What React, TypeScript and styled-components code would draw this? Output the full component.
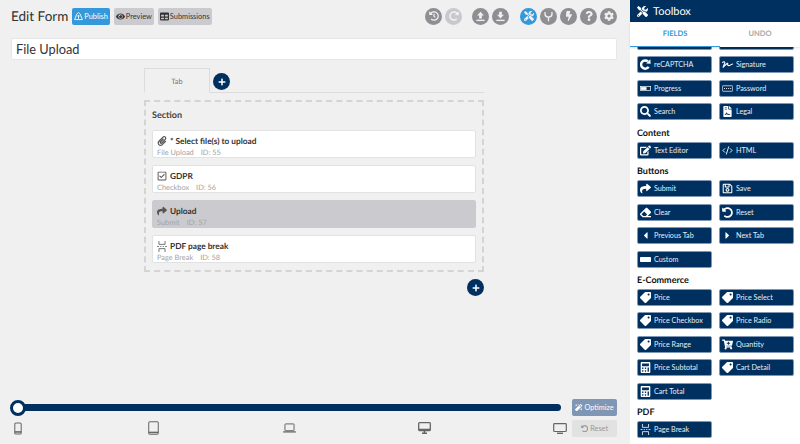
import React from 'react';
import styled, { createGlobalStyle } from 'styled-components';
import {
  FaBolt,
  FaCalculator,
  FaCaretLeft,
  FaCaretRight,
  FaCartPlus,
  FaCog,
  FaEdit,
  FaEraser,
  FaEye,
  FaFileContract,
  FaHistory,
  FaMagic,
  FaPaperclip,
  FaPlus,
  FaQuestion,
  FaRedoAlt,
  FaRegCheckSquare,
  FaRegSave,
  FaSearch,
  FaShare,
  FaSignature,
  FaTable,
  FaTag,
  FaTools,
  FaUndoAlt,
} from 'react-icons/fa';
import { LuCodeXml } from 'react-icons/lu';

const NAVY = '#00305f';

const GlobalStyle = createGlobalStyle`
  html, body, #root {
    margin: 0;
    height: 100%;
  }
  body {
    background: #f0f0f0;
    font-family: Lato, "Open Sans", "Liberation Sans", sans-serif;
    text-rendering: geometricPrecision;
    overflow: hidden;
  }
  * { box-sizing: border-box; }
`;

const UploadGlyph = () => (
  <svg viewBox="0 0 16 16" width="11" height="11" fill="currentColor">
    <path d="M8 1 13 6.5H10V11H6V6.5H3Z" />
    <rect x="2" y="12.6" width="12" height="2" />
  </svg>
);

const DownloadGlyph = () => (
  <svg viewBox="0 0 16 16" width="11" height="11" fill="currentColor">
    <path d="M8 11 13 5.5H10V1H6V5.5H3Z" />
    <rect x="2" y="12.6" width="12" height="2" />
  </svg>
);

const ForkGlyph = () => (
  <svg viewBox="0 0 16 16" width="11" height="11" fill="none" stroke="currentColor" strokeWidth="2">
    <path d="M3 1.5V5Q3 8 8 9Q13 8 13 5V1.5M8 9V15" />
  </svg>
);

const PublishGlyph = () => (
  <svg viewBox="0 0 16 16" width="9" height="9" fill="none" stroke="currentColor" strokeWidth="1.5">
    <path d="M8 12V6M5.5 8 8 5.5 10.5 8" />
    <path d="M5 3.5 8 1 11 3.5 15 13.5H1Z" />
  </svg>
);

const PageBreakGlyph = () => (
  <svg viewBox="0 0 16 18" width="100%" height="100%" fill="none" stroke="currentColor" strokeWidth="1.3">
    <path d="M3 0V5.5H13V0M3 18V12.500H13V18M0 9H3M5 9H7M9 9H11M13 9H16" />
  </svg>
);

const ProgressGlyph = () => (
  <svg viewBox="0 0 16 10" width="100%" height="100%" fill="none" stroke="currentColor" strokeWidth="1">
    <rect x="0.5" y="2" width="15" height="6" />
    <rect x="1.5" y="3" width="8" height="4" fill="currentColor" stroke="none" />
  </svg>
);

const PasswordGlyph = () => (
  <svg viewBox="0 0 16 10" width="100%" height="100%" fill="none" stroke="currentColor" strokeWidth="1">
    <rect x="0.5" y="1" width="15" height="8" rx="1" />
    <path d="M3 5H4.4M6 5H7.4M9 5H10.4M12 5H13.4" strokeWidth="1.4" />
  </svg>
);

const CustomGlyph = () => (
  <svg viewBox="0 0 16 10" width="100%" height="100%" fill="currentColor">
    <rect x="0" y="1.5" width="16" height="7" rx="1" />
  </svg>
);

const CaptchaGlyph = () => (
  <svg viewBox="0 0 16 16" width="100%" height="100%" fill="none" stroke="currentColor" strokeWidth="3.6">
    <path d="M12.5 11.500A6 6 0 1 1 11.500 3.500" />
    <path d="M9 6.500 15.500 7 15 0.500Z" fill="currentColor" stroke="none" />
  </svg>
);

const PhoneGlyph = () => (
  <svg viewBox="0 0 10 16" width="8" height="13" fill="none" stroke="currentColor" strokeWidth="1.3">
    <rect x="1" y="1" width="8" height="14" rx="1.4" />
    <path d="M1 12.3H9" strokeWidth="2" />
  </svg>
);

const TabletGlyph = () => (
  <svg viewBox="0 0 12 15" width="11" height="14" fill="none" stroke="currentColor" strokeWidth="1.1">
    <rect x="0.8" y="0.8" width="10.4" height="13.4" rx="1.2" />
    <path d="M0.8 12.3H11.2" strokeWidth="1.6" />
  </svg>
);

const LaptopGlyph = () => (
  <svg viewBox="0 0 14 11" width="13" height="10" fill="none" stroke="currentColor" strokeWidth="1.1">
    <rect x="2" y="1" width="10" height="7.5" rx="0.6" />
    <path d="M0 9.8H14" strokeWidth="1.4" />
  </svg>
);

const DesktopGlyph = () => (
  <svg viewBox="0 0 13 12" width="13" height="12" fill="none" stroke="currentColor">
    <rect x="0.7" y="0.7" width="11.6" height="7.8" rx="0.8" strokeWidth="1.3" />
    <path d="M0.7 7.6H12.3M6.5 8.5V11M4 11.2H9" strokeWidth="1.6" />
  </svg>
);

const WideGlyph = () => (
  <svg viewBox="0 0 14 11" width="14" height="11" fill="none" stroke="currentColor" strokeWidth="1.2">
    <rect x="0.7" y="0.7" width="12.6" height="7.8" rx="0.8" />
    <path d="M4 10.3H10" strokeWidth="1.4" />
  </svg>
);

type ToolItem = { label: string; icon: React.ReactNode };
type ToolGroup = { heading?: string; items: ToolItem[] };

const PriceTag = styled(FaTag)`
  transform: scaleX(-1);
`;

const toolGroups: ToolGroup[] = [
  {
    items: [
      { label: 'reCAPTCHA', icon: <CaptchaGlyph /> },
      { label: 'Signature', icon: <FaSignature /> },
      { label: 'Progress', icon: <ProgressGlyph /> },
      { label: 'Password', icon: <PasswordGlyph /> },
      { label: 'Search', icon: <FaSearch /> },
      { label: 'Legal', icon: <FaFileContract /> },
    ],
  },
  {
    heading: 'Content',
    items: [
      { label: 'Text Editor', icon: <FaEdit /> },
      { label: 'HTML', icon: <LuCodeXml /> },
    ],
  },
  {
    heading: 'Buttons',
    items: [
      { label: 'Submit', icon: <FaShare /> },
      { label: 'Save', icon: <FaRegSave /> },
      { label: 'Clear', icon: <FaEraser /> },
      { label: 'Reset', icon: <FaUndoAlt /> },
      { label: 'Previous Tab', icon: <FaCaretLeft /> },
      { label: 'Next Tab', icon: <FaCaretRight /> },
      { label: 'Custom', icon: <CustomGlyph /> },
    ],
  },
  {
    heading: 'E-Commerce',
    items: [
      { label: 'Price', icon: <PriceTag /> },
      { label: 'Price Select', icon: <PriceTag /> },
      { label: 'Price Checkbox', icon: <PriceTag /> },
      { label: 'Price Radio', icon: <PriceTag /> },
      { label: 'Price Range', icon: <PriceTag /> },
      { label: 'Quantity', icon: <FaCartPlus /> },
      { label: 'Price Subtotal', icon: <FaCalculator /> },
      { label: 'Cart Detail', icon: <PriceTag /> },
      { label: 'Cart Total', icon: <FaCalculator /> },
    ],
  },
  {
    heading: 'PDF',
    items: [{ label: 'Page Break', icon: <PageBreakGlyph /> }],
  },
];

const formFields = [
  { title: 'Select file(s) to upload', required: true, type: 'File Upload', id: 55, icon: <FaPaperclip /> },
  { title: 'GDPR', type: 'Checkbox', id: 56, icon: <FaRegCheckSquare /> },
  { title: 'Upload', type: 'Submit', id: 57, icon: <FaShare />, selected: true },
  { title: 'PDF page break', type: 'Page Break', id: 58, icon: <PageBreakGlyph /> },
];

function App() {
  return (
    <Page>
      <GlobalStyle />
      <Main>
        <TopBar>
          <PageTitle>Edit Form</PageTitle>
          <ActionButton $primary>
            <PublishGlyph /> Publish
          </ActionButton>
          <ActionButton>
            <FaEye /> Preview
          </ActionButton>
          <ActionButton>
            <FaTable /> Submissions
          </ActionButton>
          <RoundGroup>
            <RoundIcon><FaHistory /></RoundIcon>
            <RoundIcon $disabled><FaRedoAlt /></RoundIcon>
          </RoundGroup>
          <RoundGroup>
            <RoundIcon><UploadGlyph /></RoundIcon>
            <RoundIcon><DownloadGlyph /></RoundIcon>
          </RoundGroup>
          <RoundGroup>
            <RoundIcon $active><FaTools /></RoundIcon>
            <RoundIcon><ForkGlyph /></RoundIcon>
            <RoundIcon><FaBolt /></RoundIcon>
            <RoundIcon><FaQuestion /></RoundIcon>
            <RoundIcon><FaCog /></RoundIcon>
          </RoundGroup>
        </TopBar>

        <TitleInput defaultValue="File Upload" />

        <Canvas>
          <TabStrip>
            <Tab>Tab</Tab>
            <AddCircle><FaPlus /></AddCircle>
          </TabStrip>
          <SectionBox>
            <SectionLabel>Section</SectionLabel>
            {formFields.map((field) => (
              <FieldCard key={field.id} $selected={field.selected}>
                <FieldTitle>
                  <FieldIcon>{field.icon}</FieldIcon>
                  {field.required && <Required>*</Required>}
                  {field.title}
                </FieldTitle>
                <FieldMeta>
                  <span>{field.type}</span>
                  <span>ID: {field.id}</span>
                </FieldMeta>
              </FieldCard>
            ))}
          </SectionBox>
          <SectionFooter>
            <AddCircle><FaPlus /></AddCircle>
          </SectionFooter>
        </Canvas>

        <Footer>
          <SliderColumn>
            <Track>
              <Thumb />
            </Track>
            <DeviceRow>
              <DeviceSlot><PhoneGlyph /></DeviceSlot>
              <DeviceSlot><TabletGlyph /></DeviceSlot>
              <DeviceSlot><LaptopGlyph /></DeviceSlot>
              <DeviceSlot><DesktopGlyph /></DeviceSlot>
              <DeviceSlot><WideGlyph /></DeviceSlot>
            </DeviceRow>
          </SliderColumn>
          <FooterButtons>
            <OptimizeButton><FaMagic /> Optimize</OptimizeButton>
            <ResetButton><FaUndoAlt /> Reset</ResetButton>
          </FooterButtons>
        </Footer>
      </Main>

      <Toolbox>
        <ToolboxHeader>
          <FaTools /> Toolbox
        </ToolboxHeader>
        <ToolTabs>
          <ToolTab $active>FIELDS</ToolTab>
          <ToolTab>UNDO</ToolTab>
        </ToolTabs>
        <ToolList>
          <ToolGrid>
            <ToolButton />
            <ToolButton />
          </ToolGrid>
          {toolGroups.map((group, i) => (
            <React.Fragment key={i}>
              {group.heading && <GroupHeading>{group.heading}</GroupHeading>}
              <ToolGrid>
                {group.items.map((item) => (
                  <ToolButton key={item.label}>
                    <ToolIcon>{item.icon}</ToolIcon>
                    {item.label}
                  </ToolButton>
                ))}
              </ToolGrid>
            </React.Fragment>
          ))}
        </ToolList>
      </Toolbox>
    </Page>
  );
}

const Page = styled.div`
  display: flex;
  width: 800px;
  height: 444px;
  overflow: hidden;
`;

const Main = styled.main`
  width: 630px;
  display: flex;
  flex-direction: column;
  padding: 0 13px 7px 11px;
`;

const TopBar = styled.div`
  display: flex;
  align-items: center;
  height: 38px;
  padding-bottom: 6px;
`;

const PageTitle = styled.h1`
  margin: 0 4px 0 0;
  font-size: 13.5px;
  line-height: 20px;
  font-weight: 400;
  color: #333;
  white-space: nowrap;
`;

const ActionButton = styled.button<{ $primary?: boolean }>`
  display: inline-flex;
  align-items: center;
  gap: 1px;
  height: 17px;
  margin-right: 4px;
  padding: 0 2px;
  border: 0;
  border-radius: 2px;
  font-family: inherit;
  font-size: 7.4px;
  white-space: nowrap;
  background: ${(p) => (p.$primary ? '#3498db' : '#cbcbcf')};
  color: ${(p) => (p.$primary ? '#fff' : '#333')};
  svg {
    font-size: 9px;
  }
`;

const RoundGroup = styled.div`
  display: flex;
  gap: 3px;
  margin-left: 11px;
  &:nth-of-type(1) {
    margin-left: auto;
  }
  &:nth-of-type(2) {
    margin-left: 10px;
  }
`;

const RoundIcon = styled.span<{ $active?: boolean; $disabled?: boolean }>`
  display: flex;
  align-items: center;
  justify-content: center;
  width: 17px;
  height: 17px;
  border-radius: 50%;
  font-size: 10px;
  color: #f0f0f0;
  background: ${(p) => (p.$active ? '#3498db' : p.$disabled ? '#c9c9cd' : '#8e8e93')};
`;

const TitleInput = styled.input`
  display: block;
  width: 100%;
  height: 22px;
  padding: 0 4px;
  border: 1px solid #e6e6e6;
  border-radius: 2px;
  background: #fff;
  font-family: inherit;
  font-size: 12.8px;
  color: #333;
  outline: none;
`;

const Canvas = styled.div`
  align-self: center;
  width: 340px;
  margin-top: 8px;
`;

const TabStrip = styled.div`
  display: flex;
  align-items: flex-end;
  gap: 3px;
  height: 25px;
  border-bottom: 1px solid #dcdcdc;
`;

const Tab = styled.div`
  width: 66px;
  height: 25px;
  margin-bottom: -1px;
  border: 1px solid #dcdcdc;
  border-bottom-color: #f0f0f0;
  font-size: 7.4px;
  line-height: 25px;
  text-align: center;
  color: #777;
`;

const AddCircle = styled.span`
  display: flex;
  align-items: center;
  justify-content: center;
  width: 17px;
  height: 17px;
  margin-bottom: 2px;
  border-radius: 50%;
  background: ${NAVY};
  color: #fff;
  font-size: 8px;
`;

const SectionBox = styled.section`
  display: flex;
  flex-direction: column;
  gap: 7px;
  height: 172px;
  margin-top: 7px;
  padding: 0 6px;
  border: 2px dashed #d4d4d4;
`;

const SectionLabel = styled.div`
  height: 20px;
  padding-top: 7px;
  margin-bottom: 1px;
  font-size: 9px;
  line-height: 12px;
  font-weight: 700;
  color: #444;
`;

const FieldCard = styled.article<{ $selected?: boolean }>`
  height: 28px;
  padding: 4px 4px 0;
  border: 1px solid ${(p) => (p.$selected ? '#cbcbcf' : '#e2e2e2')};
  border-radius: 2px;
  background: ${(p) => (p.$selected ? '#cbcbcf' : '#fff')};
`;

const FieldTitle = styled.div`
  display: flex;
  align-items: center;
  height: 12px;
  font-size: 8.3px;
  font-weight: 700;
  color: #333;
`;

const FieldIcon = styled.span`
  display: inline-flex;
  justify-content: center;
  width: 10px;
  height: 11px;
  margin-right: 3px;
  font-size: 10px;
  color: #555;
`;

const Required = styled.span`
  margin-right: 2px;
  color: #333;
`;

const FieldMeta = styled.div`
  display: flex;
  gap: 7px;
  font-size: 7.4px;
  line-height: 11px;
  color: #a3a3a3;
`;

const SectionFooter = styled.div`
  display: flex;
  justify-content: flex-end;
  padding: 7px 0 0;
`;

const Footer = styled.footer`
  display: flex;
  align-items: flex-end;
  gap: 11px;
  margin-top: auto;
`;

const SliderColumn = styled.div`
  flex: 1;
  padding-bottom: 2px;
`;

const Track = styled.div`
  position: relative;
  height: 7px;
  border-radius: 4px;
  margin-bottom: 10px;
  background: ${NAVY};
`;

const Thumb = styled.span`
  position: absolute;
  left: -1px;
  top: -4px;
  width: 16px;
  height: 16px;
  border: 3px solid ${NAVY};
  border-radius: 50%;
  background: #fff;
`;

const DeviceRow = styled.div`
  display: flex;
  align-items: center;
  justify-content: space-between;
  height: 14px;
  margin-right: -6px;
  color: #666;
`;

const DeviceSlot = styled.span`
  display: flex;
  justify-content: center;
  width: 14px;
`;

const FooterButtons = styled.div`
  display: flex;
  flex-direction: column;
  gap: 4px;
  width: 45px;
`;

const OptimizeButton = styled.button`
  display: flex;
  align-items: center;
  justify-content: center;
  gap: 2px;
  height: 17px;
  padding: 0;
  border: 0;
  border-radius: 2px;
  background: #7f97b4;
  color: #fff;
  font-family: inherit;
  font-size: 7.3px;
`;

const ResetButton = styled(OptimizeButton)`
  background: #e2e2e2;
  color: #999;
`;

const Toolbox = styled.aside`
  display: flex;
  flex-direction: column;
  width: 170px;
  background: #fff;
`;

const ToolboxHeader = styled.header`
  display: flex;
  align-items: center;
  gap: 5px;
  height: 22px;
  padding-left: 7px;
  background: ${NAVY};
  color: #fff;
  font-size: 11px;
  svg {
    font-size: 11px;
  }
`;

const ToolTabs = styled.nav`
  display: flex;
  height: 25px;
  box-shadow: 0 1px 2px rgba(0, 0, 0, 0.12);
  position: relative;
`;

const ToolTab = styled.div<{ $active?: boolean }>`
  flex: ${(p) => (p.$active ? '0 0 90px' : 1)};
  border-bottom: 1px solid ${(p) => (p.$active ? '#3498db' : 'transparent')};
  font-size: 7.5px;
  font-weight: 700;
  line-height: 24px;
  text-align: center;
  color: ${(p) => (p.$active ? '#3498db' : '#a8a8a8')};
`;

const ToolList = styled.div`
  flex: 1;
  overflow: hidden;
  padding: 0 6px 0 7px;
  & > div:first-child {
    margin-top: -14px;
  }
`;

const ToolGrid = styled.div`
  display: grid;
  grid-template-columns: 75px 75px;
  column-gap: 7px;
  row-gap: 6.4px;
  margin-bottom: 6.4px;
`;

const GroupHeading = styled.h2`
  margin: 5px 0 3.2px;
  font-size: 9px;
  line-height: 12px;
  font-weight: 700;
  color: #111;
`;

const ToolButton = styled.button`
  display: flex;
  align-items: center;
  height: 17px;
  padding: 0;
  border: 1px solid #7f97b4;
  border-radius: 2px;
  background: ${NAVY};
  color: #e6edf5;
  font-family: inherit;
  font-size: 7.2px;
  white-space: nowrap;
`;

const ToolIcon = styled.span`
  display: flex;
  align-items: center;
  justify-content: center;
  flex: none;
  width: 11px;
  height: 11px;
  margin: 0 3px 0 2px;
  font-size: 11px;
  color: #fff;
`;

export default App;
